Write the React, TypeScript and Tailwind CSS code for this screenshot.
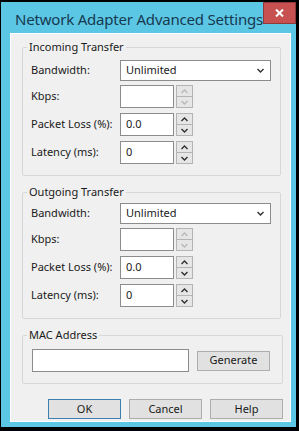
import React from "react";

function Arrow({ up, disabled }: { up?: boolean; disabled?: boolean }) {
  return (
    <svg width="7" height="5" viewBox="0 0 7 5" className={disabled ? "text-[#b9b9b9]" : "text-[#303030]"}>
      <polyline
        points={up ? "0.5,4 3.5,1 6.5,4" : "0.5,1 3.5,4 6.5,1"}
        fill="none"
        stroke="currentColor"
        strokeWidth="1.4"
      />
    </svg>
  );
}

function Spin({ value, disabled }: { value: string; disabled?: boolean }) {
  return (
    <div className="flex items-center h-[23px]">
      <div className="w-[54px] h-[23px] bg-white border border-[#8c8c8c] px-[5px] flex items-center text-[11px]">{value}</div>
      <div className="ml-[2px] w-[17px] h-[23px] flex flex-col">
        <div className="flex-1 bg-[#e6e6e6] border border-[#b4b4b4] flex items-center justify-center">
          <Arrow up disabled={disabled} />
        </div>
        <div className="flex-1 bg-[#e6e6e6] border border-t-0 border-[#b4b4b4] flex items-center justify-center">
          <Arrow disabled={disabled} />
        </div>
      </div>
    </div>
  );
}

function Row({ label, children, className = "" }: { label: string; children: React.ReactNode; className?: string }) {
  return (
    <div className={`flex items-center ${className}`}>
      <div className="w-[89px] text-[11px]">{label}</div>
      {children}
    </div>
  );
}

function Transfer({ title, className = "" }: { title: string; className?: string }) {
  return (
    <fieldset className={`border border-[#d7d7d7] rounded-[2px] pl-[8px] pr-[9px] pb-[11px] ${className}`}>
      <legend className="ml-[-4px] px-[2px] text-[11px] leading-[14px]">{title}</legend>
      <Row label="Bandwidth:">
        <div className="flex-1 h-[21px] bg-white border border-[#8c8c8c] pl-[5px] pr-[6px] flex items-center justify-between text-[11px]">
          <span>Unlimited</span>
          <Arrow />
        </div>
      </Row>
      <Row label="Kbps:" className="mt-[4px]">
        <Spin value="" disabled />
      </Row>
      <Row label="Packet Loss (%):" className="mt-[5px]">
        <Spin value="0.0" />
      </Row>
      <Row label="Latency (ms):" className="mt-[5px]">
        <Spin value="0" />
      </Row>
    </fieldset>
  );
}

function Btn({ children, primary }: { children: React.ReactNode; primary?: boolean }) {
  return (
    <button
      className={`w-[73px] h-[20px] bg-[#e1e1e1] border text-[11px] text-[#1a1a1a] flex items-center justify-center ${
        primary ? "border-[#3c7fb1]" : "border-[#adadad]"
      }`}
    >
      {children}
    </button>
  );
}

export default function App() {
  return (
    <div className="w-[299px] h-[431px] bg-[#5cc6e5] border-black border-l-[1px] border-t-[2px] border-r-[3px] border-b-[4px] flex flex-col font-['Noto_Sans',sans-serif] text-[#1a1a1a]">
      {/* title bar */}
      <div className="h-[31px] shrink-0 flex items-start">
        <div className="pl-[14px] pt-[8px] text-[15px] leading-[19px] text-[#173a50] tracking-[-0.2px] whitespace-nowrap">
          Network Adapter Advanced Settings
        </div>
        <div className="ml-auto mr-[4px] w-[33px] h-[22px] shrink-0 bg-[#c75050] border border-[#8e3a3a] flex items-center justify-center">
          <svg width="9" height="8" viewBox="0 0 9 8">
            <path d="M1 0.5 L8 7.5 M8 0.5 L1 7.5" stroke="#fff" strokeWidth="2" />
          </svg>
        </div>
      </div>

      {/* body */}
      <div className="ml-[9px] mr-[5px] mb-[5px] flex-1 bg-[#f0f0f0] border border-white pl-[11px] pr-[9px] pt-[6px] flex flex-col">
        <Transfer title="Incoming Transfer" className="pt-[6px]" />
        <Transfer title="Outgoing Transfer" className="mt-[9px] pt-[4px]" />

        <fieldset className="mt-[9px] border border-[#d7d7d7] rounded-[2px] pl-[9px] pr-[12px] pt-[7px] pb-[11px]">
          <legend className="ml-[-5px] px-[2px] text-[11px] leading-[14px]">MAC Address</legend>
          <div className="flex items-center">
            <div className="w-[157px] h-[23px] bg-white border border-[#8c8c8c]" />
            <div className="ml-[8px]">
              <Btn>Generate</Btn>
            </div>
          </div>
        </fieldset>

        <div className="mt-[15px] -mr-[2px] flex justify-end gap-[8px]">
          <Btn primary>OK</Btn>
          <Btn>Cancel</Btn>
          <Btn>Help</Btn>
        </div>
      </div>
    </div>
  );
}
